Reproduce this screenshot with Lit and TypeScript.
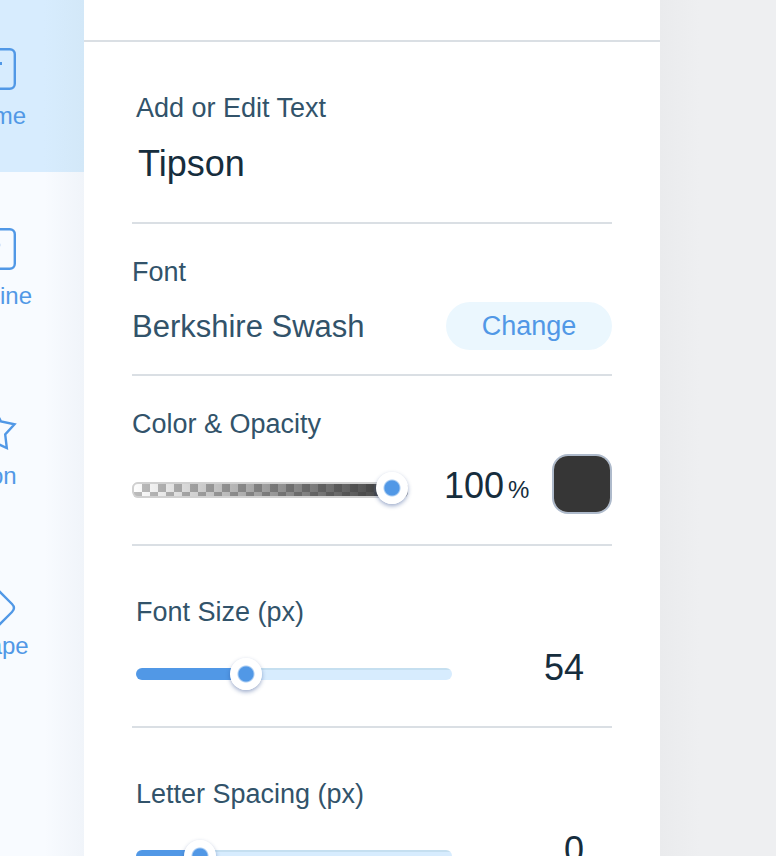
import { LitElement, html, css, svg, nothing } from "lit";
import { customElement, property, state } from "lit/decorators.js";
import { classMap } from "lit/directives/class-map.js";
import { styleMap } from "lit/directives/style-map.js";

const icons = {
  name: svg`
    <rect x="1.200" y="2.200" width="41.600" height="39.600" rx="5" />
    <path d="M14 16.5H30M22 16.5V31" stroke-width="3" />`,
  tagline: svg`
    <rect x="1.200" y="2.200" width="41.600" height="39.600" rx="5" />
    <path d="M16 18H28.5" opacity="0.35" />`,
  icon: svg`
    <path d="M22 1.500L29 14.500L42.500 17.200L33.200 27.500L34.800 41L22 35L9.200 41L10.800 27.500L1.500 17.200L15 14.500Z" />`,
  shape: svg`
    <path d="M26 13L40 27Q44 31 40 35L26 49Q22 53 18 49L4 35Q0 31 4 27L18 13Q22 9 26 13Z" />`,
};

interface NavItem {
  id: keyof typeof icons;
  label: string;
}

const navItems: NavItem[] = [
  { id: "name", label: "Name" },
  { id: "tagline", label: "Tagline" },
  { id: "icon", label: "Icon" },
  { id: "shape", label: "Shape" },
];

@customElement("side-nav")
export class SideNav extends LitElement {
  @property() active = "name";

  static styles = css`
    :host {
      display: block;
      background:
        linear-gradient(to left, rgba(30, 60, 100, 0.035), rgba(30, 60, 100, 0) 40px),
        #f8fbff;
    }
    nav {
      display: flex;
      flex-direction: column;
    }
    .item {
      box-sizing: border-box;
      height: 180px;
      padding: 55px 0 0;
      border: 0;
      background: none;
      display: flex;
      flex-direction: column;
      align-items: center;
      gap: 11px;
      color: #5198e6;
      font: 24px/28px "Liberation Sans", Arial, sans-serif;
      cursor: pointer;
    }
    .item.active {
      background: linear-gradient(to left, #d3e8f8, #d7ecfe 40px);
    }
    .item.shape {
      padding-top: 45px;
    }
    svg {
      flex: none;
      width: 44px;
      height: 44px;
      overflow: visible;
      fill: none;
      stroke: currentColor;
      stroke-width: 2.4;
    }
  `;

  render() {
    return html`<nav>
      ${navItems.map(
        (item) => html`<button
          class=${classMap({ item: true, active: item.id === this.active, [item.id]: true })}
          @click=${() => (this.active = item.id)}
        >
          <svg viewBox="0 0 44 44" aria-hidden="true">${icons[item.id]}</svg>
          <span>${item.label}</span>
        </button>`,
      )}
    </nav>`;
  }
}

@customElement("range-slider")
export class RangeSlider extends LitElement {
  @property({ type: Number }) min = 0;
  @property({ type: Number }) max = 100;
  @property({ type: Number }) value = 0;
  @property() label = "";
  @property() variant: "fill" | "opacity" = "fill";

  static styles = css`
    :host {
      display: block;
      min-width: 0;
    }
    input {
      appearance: none;
      display: block;
      width: 100%;
      height: 32px;
      margin: 0;
      background: none;
      cursor: pointer;
    }
    input::-webkit-slider-runnable-track {
      box-sizing: border-box;
      height: 12px;
      border-radius: 6px;
      background:
        linear-gradient(#5198e6, #5198e6) 0 0 / calc(16px + (100% - 32px) * var(--fill)) 100% no-repeat,
        linear-gradient(#c5dff0 2px, #d7ecfe 2px);
    }
    input::-webkit-slider-thumb {
      appearance: none;
      width: 32px;
      height: 32px;
      margin-top: -10px;
      border-radius: 50%;
      background: radial-gradient(circle, #5198e6 7px, #ffffff 9px);
      box-shadow: 0 2px 4px rgba(40, 70, 140, 0.45);
    }
    .opacity::-webkit-slider-runnable-track {
      height: 16px;
      border-radius: 6px;
      box-shadow: inset 0 0 0 2px #d0d0d0;
      background:
        linear-gradient(to right, rgba(54, 54, 54, 0), #363636),
        repeating-conic-gradient(#bcbcbc 0 25%, #ffffff 0 50%) 2px 2px / 16px 16px;
    }
  `;

  private onInput(event: Event) {
    this.value = Number((event.target as HTMLInputElement).value);
    this.dispatchEvent(new CustomEvent("value-change", { detail: this.value }));
  }

  render() {
    const fill = (this.value - this.min) / (this.max - this.min);
    return html`<input
      type="range"
      class=${this.variant}
      style=${styleMap({ "--fill": String(fill) })}
      aria-label=${this.label}
      min=${this.min}
      max=${this.max}
      .value=${String(this.value)}
      @input=${this.onInput}
    />`;
  }
}

@customElement("app-root")
export class AppRoot extends LitElement {
  @state() private opacity = 100;
  @state() private fontSize = 54;
  @state() private letterSpacing = 0;

  static styles = css`
    :host {
      display: grid;
      grid-template-columns: 84px minmax(0, 576px) 1fr;
      height: 100vh;
      overflow: hidden;
      font-family: "Liberation Sans", Arial, sans-serif;
      color: #32536a;
      background: #ffffff;
    }
    .nav {
      width: 180px;
      justify-self: end;
      margin-top: -8px;
    }
    .panel {
      overflow-y: auto;
      scrollbar-width: none;
      background: #ffffff;
    }
    .canvas {
      background: linear-gradient(to right, #eaebed, #eeeff1 40px);
    }
    .header {
      height: 40px;
      border-bottom: 2px solid #dadfe4;
    }
    form {
      padding: 0 48px;
    }
    .field {
      display: flex;
      flex-direction: column;
      gap: 14px;
      padding: 32px 0 24px;
      border-bottom: 2px solid #dadfe4;
    }
    .field.color {
      padding-bottom: 30px;
    }
    .field.tall {
      gap: 18px;
      padding: 50px 0 36px 4px;
      border-bottom: 0;
    }
    .label {
      font-size: 27px;
      line-height: 32px;
    }
    .row {
      display: flex;
      align-items: center;
    }
    .range .row {
      align-items: flex-end;
    }
    .row range-slider {
      flex: 1;
    }
    .divider {
      height: 2px;
      background: #dadfe4;
    }
    .entry {
      box-sizing: border-box;
      height: 44px;
      margin: 0;
      padding: 0;
      border: 0;
      background: none;
      color: #162d3d;
      font: 36px/44px "Liberation Sans", Arial, sans-serif;
    }
    .text {
      width: 100%;
      padding-left: 2px;
    }
    .value {
      width: 160px;
      padding-right: 28px;
      text-align: right;
    }
    .font-name {
      flex: 1;
      padding-top: 2px;
      font-size: 31px;
      line-height: 46px;
    }
    .change {
      width: 166px;
      height: 48px;
      padding: 0;
      border: 0;
      border-radius: 24px;
      background: #ebf7fe;
      color: #5198e6;
      font: 27px/48px "Liberation Sans", Arial, sans-serif;
      cursor: pointer;
    }
    .color range-slider {
      padding-top: 12px;
    }
    .percent {
      display: flex;
      align-items: baseline;
      gap: 4px;
      padding-top: 4px;
      margin: 0 24px 0 36px;
      color: #162d3d;
    }
    .percent .entry {
      width: 60px;
    }
    .unit {
      width: 20px;
      font-size: 24px;
    }
    .swatch {
      appearance: none;
      box-sizing: border-box;
      width: 60px;
      height: 60px;
      padding: 0;
      border: 2px solid #aebacb;
      border-radius: 16px;
      background: #363636;
      overflow: hidden;
      cursor: pointer;
    }
    .swatch::-webkit-color-swatch-wrapper {
      padding: 0;
    }
    .swatch::-webkit-color-swatch {
      border: 0;
    }
  `;

  private rangeField(
    id: string,
    label: string,
    value: number,
    min: number,
    max: number,
    update: (value: number) => void,
    last = false,
  ) {
    return html`<div class="field tall range">
        <label class="label" for=${id}>${label}</label>
        <div class="row">
          <range-slider
            label=${label}
            .min=${min}
            .max=${max}
            .value=${value}
            @value-change=${(e: CustomEvent<number>) => update(e.detail)}
          ></range-slider>
          <input class="entry value" id=${id} inputmode="numeric" .value=${String(value)} />
        </div>
      </div>
      ${last ? nothing : html`<div class="divider"></div>`}`;
  }

  render() {
    return html`
      <side-nav class="nav"></side-nav>
      <main class="panel">
        <div class="header"></div>
        <form @submit=${(e: Event) => e.preventDefault()}>
          <div class="field tall">
            <label class="label" for="text">Add or Edit Text</label>
            <input class="entry text" id="text" value="Tipson" />
          </div>
          <div class="divider"></div>
          <div class="field">
            <div class="label">Font</div>
            <div class="row">
              <span class="font-name">Berkshire Swash</span>
              <button class="change" type="button">Change</button>
            </div>
          </div>
          <div class="field color">
            <label class="label" for="opacity">Color &amp; Opacity</label>
            <div class="row">
              <range-slider
                variant="opacity"
                label="Opacity"
                .value=${this.opacity}
                @value-change=${(e: CustomEvent<number>) => (this.opacity = e.detail)}
              ></range-slider>
              <div class="percent">
                <input class="entry" id="opacity" inputmode="numeric" .value=${String(this.opacity)} />
                <span class="unit">%</span>
              </div>
              <input class="swatch" type="color" aria-label="Color" value="#363636" />
            </div>
          </div>
          ${this.rangeField("size", "Font Size (px)", this.fontSize, 7, 149, (v) => (this.fontSize = v))}
          ${this.rangeField("spacing", "Letter Spacing (px)", this.letterSpacing, -10, 49, (v) => (this.letterSpacing = v), true)}
        </form>
      </main>
      <div class="canvas"></div>
    `;
  }
}
